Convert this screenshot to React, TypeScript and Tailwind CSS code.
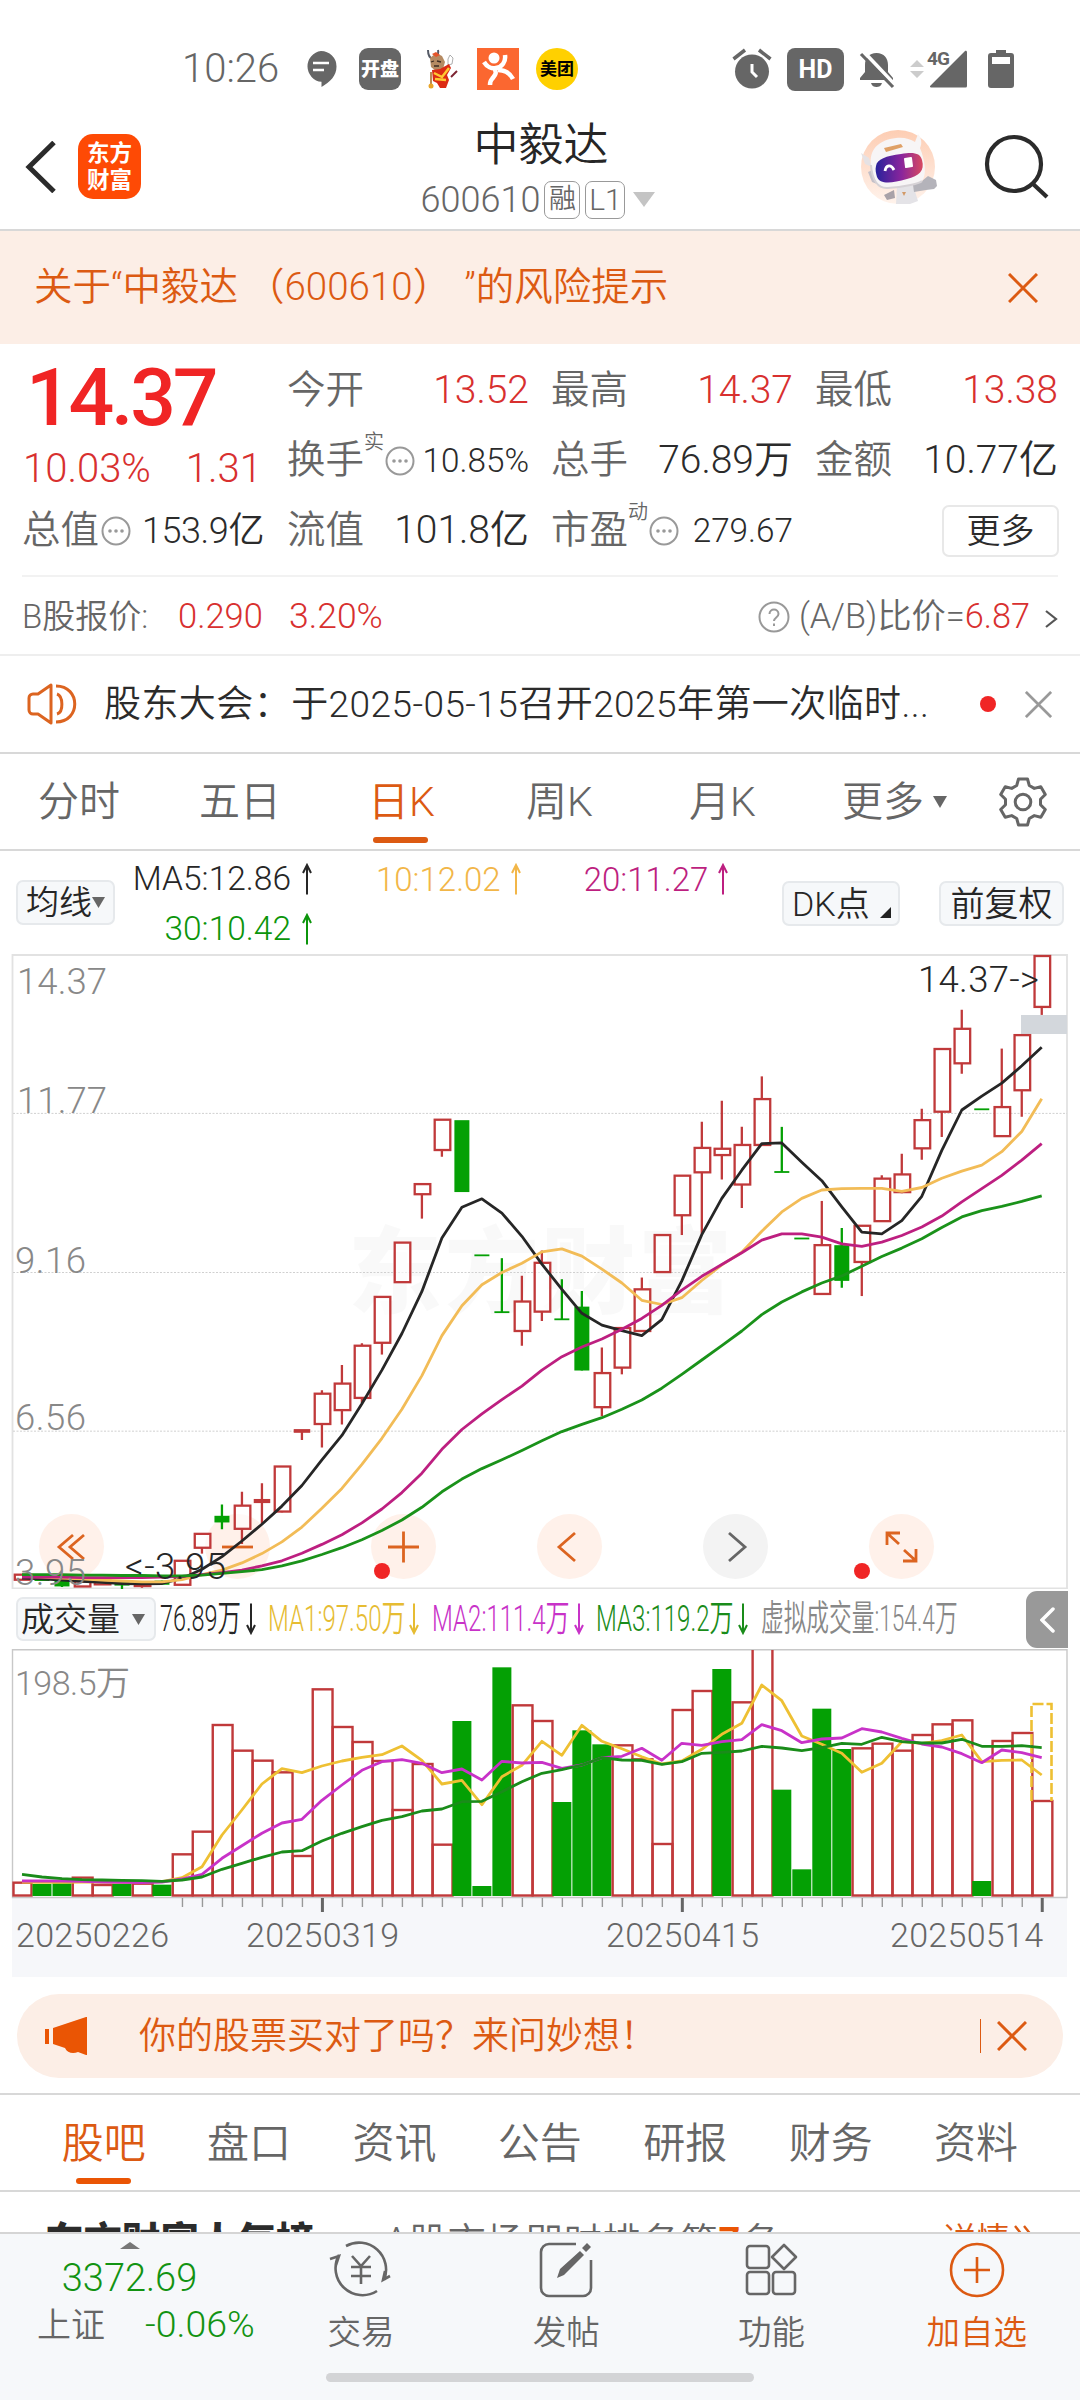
import type { ReactNode } from "react";
import clsx from "clsx";

const RED = "#c0393a";
const GREEN = "#04a004";

// [color, open/close top, bottom, high, low] in chart units
type Candle = ["r" | "g", number, number, number, number];

const candles: Candle[] = [
  ["r", 1508, 1520, 1508, 1520], ["g", 1517, 1521, 1516, 1522], ["g", 1522, 1534, 1520, 1537],
  ["r", 1524, 1536, 1524, 1536], ["r", 1522, 1531, 1520, 1532], ["g", 1526, 1532, 1524, 1544],
  ["r", 1526, 1535, 1524, 1539], ["g", 1524, 1530, 1522, 1532], ["r", 1475, 1532, 1475, 1532],
  ["r", 1411, 1444, 1411, 1458], ["g", 1370, 1382, 1341, 1400], ["r", 1344, 1399, 1311, 1435],
  ["r", 1330, 1336, 1291, 1387], ["r", 1251, 1358, 1251, 1360], ["r", 1164, 1169, 1164, 1188],
  ["r", 1078, 1150, 1070, 1206], ["r", 1054, 1117, 1010, 1151], ["r", 964, 1088, 958, 1100],
  ["r", 848, 957, 848, 985], ["r", 719, 813, 719, 813], ["r", 580, 604, 580, 662],
  ["r", 427, 499, 427, 515], ["g", 430, 597, 430, 597], ["g", 749, 749, 749, 749],
  ["g", 884, 884, 756, 884], ["r", 859, 929, 798, 964], ["r", 767, 883, 738, 905],
  ["g", 901, 901, 806, 901], ["g", 873, 1021, 834, 1023], ["r", 1029, 1110, 968, 1131],
  ["r", 922, 1016, 922, 1032], ["r", 830, 929, 802, 929], ["r", 701, 789, 701, 789],
  ["r", 560, 654, 560, 701], ["r", 494, 552, 432, 700], ["r", 496, 511, 382, 569],
  ["r", 487, 581, 444, 637], ["r", 378, 487, 324, 487], ["g", 551, 551, 444, 551],
  ["g", 709, 709, 709, 709], ["r", 725, 841, 620, 841], ["g", 727, 808, 684, 826],
  ["r", 679, 765, 679, 846], ["r", 567, 668, 559, 668], ["r", 557, 599, 508, 602],
  ["r", 428, 495, 401, 522], ["r", 259, 408, 259, 468], ["r", 211, 293, 166, 318],
  ["g", 402, 402, 402, 402], ["r", 397, 466, 258, 466], ["r", 226, 357, 226, 420],
  ["r", 38, 159, 38, 178],
];

const priceLines: [string, number[]][] = [
  ["#262626", [1516, 1518, 1521, 1524, 1526, 1529, 1530, 1529, 1517, 1495, 1465, 1428, 1388, 1345, 1296, 1235, 1177, 1102, 1022, 935, 835, 708, 635, 615, 649, 704, 770, 830, 887, 915, 928, 940, 902, 810, 700, 614, 547, 484, 482, 528, 572, 634, 694, 698, 667, 609, 500, 404, 371, 340, 299, 255]],
  ["#f2bc57", [1512, 1514, 1516, 1518, 1521, 1523, 1525, 1525, 1520, 1508, 1497, 1480, 1458, 1430, 1395, 1350, 1303, 1246, 1184, 1115, 1035, 940, 869, 819, 790, 768, 741, 734, 751, 782, 815, 856, 866, 850, 809, 772, 742, 692, 646, 614, 594, 591, 590, 590, 597, 588, 566, 549, 535, 503, 455, 377]],
  ["#bd1f80", [1514, 1514, 1514, 1515, 1515, 1515, 1515, 1514, 1512, 1508, 1503, 1497, 1487, 1475, 1457, 1436, 1413, 1385, 1352, 1313, 1267, 1210, 1163, 1126, 1092, 1060, 1022, 990, 967, 948, 925, 899, 868, 832, 799, 771, 743, 713, 698, 698, 706, 722, 728, 718, 702, 682, 656, 622, 591, 559, 523, 484]],
  ["#1a921a", [1508, 1508, 1508, 1509, 1509, 1510, 1510, 1511, 1511, 1509, 1505, 1501, 1496, 1487, 1475, 1460, 1444, 1425, 1403, 1378, 1348, 1311, 1281, 1256, 1235, 1213, 1190, 1168, 1151, 1135, 1115, 1093, 1065, 1032, 998, 964, 929, 890, 860, 836, 815, 798, 775, 752, 732, 710, 683, 658, 643, 633, 621, 608]],
];

const volumes: ["r" | "g", number][] = [
  ["r", 908], ["g", 912], ["g", 910], ["r", 893], ["r", 915], ["g", 912], ["r", 911], ["g", 914],
  ["r", 823], ["r", 755], ["r", 435], ["r", 512], ["r", 542], ["r", 577], ["r", 828], ["r", 328],
  ["r", 441], ["r", 486], ["r", 543], ["r", 690], ["r", 552], ["r", 794], ["g", 423], ["g", 918],
  ["g", 262], ["r", 376], ["r", 423], ["g", 666], ["g", 451], ["g", 493], ["r", 496], ["r", 538],
  ["r", 792], ["r", 390], ["r", 333], ["g", 267], ["r", 367], ["r", 205], ["g", 629], ["g", 868],
  ["g", 386], ["g", 507], ["r", 505], ["r", 491], ["r", 512], ["r", 465], ["r", 433], ["r", 421],
  ["g", 903], ["r", 483], ["r", 459], ["r", 663],
];

const volumeLines: [string, number[]][] = [
  ["#eec033", [906, 907, 907, 906, 906, 907, 907, 905, 893, 860, 765, 690, 612, 566, 578, 558, 543, 532, 524, 498, 541, 612, 601, 674, 590, 556, 484, 526, 436, 484, 506, 530, 552, 543, 508, 463, 430, 315, 362, 468, 493, 520, 577, 550, 485, 490, 482, 465, 545, 541, 540, 585]],
  ["#c832c8", [903, 903, 903, 904, 906, 907, 908, 906, 897, 883, 835, 797, 760, 729, 718, 661, 615, 571, 545, 539, 550, 578, 567, 600, 544, 549, 547, 565, 555, 533, 529, 505, 541, 490, 496, 485, 479, 434, 452, 488, 477, 474, 446, 456, 475, 492, 501, 521, 548, 510, 518, 533]],
  ["#1a8c1a", [883, 891, 896, 899, 900, 901, 902, 904, 900, 891, 868, 850, 832, 816, 812, 783, 760, 740, 721, 710, 693, 687, 665, 664, 635, 605, 580, 569, 555, 533, 540, 541, 553, 545, 520, 517, 513, 499, 504, 512, 503, 490, 493, 472, 485, 489, 489, 478, 499, 499, 497, 503]],
];

const cx = (i: number) => 22 + i * 19.995;
const priceY = (v: number) => v / 2.376 - 14;
const volY = (v: number) => v / 3 - 69;
const points = (values: number[], y: (v: number) => number) =>
  values.map((v, i) => `${cx(i).toFixed(1)},${y(v).toFixed(1)}`).join(" ");

/* ---------- small pieces ---------- */

function Close({ size, className }: { size: number; className?: string }) {
  return (
    <svg width={size} height={size} viewBox="0 0 30 30" fill="none" stroke="currentColor" strokeWidth="3" className={className}>
      <path d="M1 1l28 28M29 1L1 29" />
    </svg>
  );
}

function Caret({ w, h, up, className }: { w: number; h: number; up?: boolean; className?: string }) {
  return (
    <svg width={w} height={h} viewBox="0 0 10 10" preserveAspectRatio="none" fill="currentColor" className={className}>
      <path d={up ? "M0 10L5 0l5 10z" : "M0 0h10L5 10z"} />
    </svg>
  );
}

function Arrow({ down, className }: { down?: boolean; className?: string }) {
  return (
    <svg width="10" height="32" viewBox="0 0 10 32" fill="none" stroke="currentColor" strokeWidth="2" className={clsx("shrink-0", down && "rotate-180", className)}>
      <path d="M5 1.500v30M1 10L5 2l4 8" />
    </svg>
  );
}

// Text squeezed horizontally into a fixed width
function Narrow({ w, scale, children }: { w: string; scale: string; children: ReactNode }) {
  return (
    <span className={clsx("block shrink-0", w)}>
      <span className={clsx("block w-max origin-left", scale)}>{children}</span>
    </span>
  );
}

function Dots() {
  return (
    <svg width="30" height="30" viewBox="0 0 30 30" fill="none" stroke="#999" strokeWidth="2">
      <circle cx="15" cy="15" r="13.500" />
      <g fill="#999" stroke="none">
        <circle cx="9" cy="15" r="1.800" />
        <circle cx="15" cy="15" r="1.800" />
        <circle cx="21" cy="15" r="1.800" />
      </g>
    </svg>
  );
}

/* ---------- status bar + header ---------- */

function StatusBar() {
  return (
    <div className="flex h-[118px] shrink-0 items-center pt-5 pl-[182px] text-[#666]">
      <span className="w-[123px] text-[40px]">10:26</span>
      <svg width="32" height="38" viewBox="0 0 32 38" fill="#666">
        <path d="M16 1a15.500 15.500 0 0 1 15.500 15.500C31.500 26 25 32 16.500 37v-5.200A15.500 15.500 0 0 1 16 1z" />
        <path d="M8 13h16M8 20h11" stroke="#fff" strokeWidth="2.600" />
      </svg>
      <span className="ml-[22px] flex size-[42px] items-center justify-center rounded-[9px] bg-[#666] text-[19px] font-black text-white">开盘</span>
      <svg width="32" height="42" viewBox="0 0 32 42" className="ml-[25px]">
        <path d="M2 2c0 5 1 8 5 9M12 2c1 4-1 7-3 9" fill="none" stroke="#555a66" strokeWidth="2" />
        <path d="M4 10l6-5 6 3 3 6-2 7-7 2-5-4z" fill="#b58a62" />
        <path d="M6 6l4-2 4 3-4 2z" fill="#e5542a" />
        <path d="M5 14l3-1M11 13l4 1M8 18h5" stroke="#3c2c22" strokeWidth="1.300" />
        <path d="M22 11l2-4 3 3-1 6-4 1z" fill="#fff" stroke="#999" strokeWidth=".8" />
        <path d="M6 22l8-1 9-5 2 4-4 7 2 5-3 8h-6l-3-5-4-2z" fill="#dc2b14" />
        <path d="M8 25l8 4 7-9M9 31l11 1" fill="none" stroke="#ffc832" strokeWidth="2.500" />
        <path d="M5 24v12" stroke="#a5641e" strokeWidth="1.500" />
        <circle cx="5" cy="38" r="2.500" fill="#eaa528" />
        <path d="M25 29l6-6" stroke="#7c2432" strokeWidth="2" />
      </svg>
      <svg width="42" height="42" viewBox="0 0 42 42" className="ml-[19px]">
        <path fill="#fb6730" d="M0 0h42v42H0z" />
        <circle cx="17" cy="10" r="5.500" fill="#fff" />
        <path d="M7 14c3 5 8 7 12 6 6-1 10-6 9-13M17 20c4 6 0 8-2 11-2 2-2 4-2 6M21 22c6 0 12 3 15 9" fill="none" stroke="#fff" strokeWidth="4.500" />
      </svg>
      <span className="ml-[17px] flex size-[42px] items-center justify-center rounded-full bg-[#ffd000] text-[17px] font-bold text-black">美团</span>

      <svg width="40" height="42" viewBox="0 0 40 42" className="ml-[154px]">
        <circle cx="20" cy="23.500" r="17" fill="#666" />
        <path d="M1.500 11L13 2M38.500 11L27 2" stroke="#666" strokeWidth="3.500" />
        <path d="M20 16v8l5 5" fill="none" stroke="#fff" strokeWidth="3" />
      </svg>
      <span className="ml-[15px] flex h-[43px] w-[57px] items-center justify-center rounded-[8px] bg-[#666] pt-px text-[25px] font-bold text-white">HD</span>
      <svg width="36" height="40" viewBox="0 0 36 40" className="ml-[15px]" fill="#666">
        <path d="M17.500 4c7.500 0 11.500 5 11.500 12v7l5 6v2H1v-2l5-6v-7C6 9 10 4 17.500 4zM12 34h11c-1 3-3 4-5.500 4S13 37 12 34z" />
        <path d="M4 2l31 33" stroke="#fff" strokeWidth="4" />
        <path d="M2 5l32 33" stroke="#666" strokeWidth="3.200" />
      </svg>
      <svg width="58" height="40" viewBox="0 0 58 40" overflow="visible" className="ml-[15px]">
        <path d="M0 18l7-7 7 7zM0 22l7 7 7-7z" fill="#ccc" />
        <path d="M57 3v34a1.500 1.500 0 0 1-1.500 1.500H21c-1 0-1.400-1-.7-1.700L55 2c.8-.8 2 0 2 1z" fill="#666" />
        <text x="17" y="16" fontSize="19" fontWeight="700" fill="#666" textLength="23">4G</text>
      </svg>
      <svg width="26" height="38" viewBox="0 0 26 38" className="ml-[20px]">
        <path d="M8 0h10v3h5a3 3 0 0 1 3 3v29a3 3 0 0 1-3 3H3a3 3 0 0 1-3-3V6a3 3 0 0 1 3-3h5z" fill="#666" />
        <path d="M4 7h18v7H4z" fill="#fff" />
      </svg>
    </div>
  );
}

function Robot() {
  return (
    <svg width="78" height="78" viewBox="0 0 78 78">
      <defs>
        <linearGradient id="bg" x1="0" y1="0" x2="0" y2="1">
          <stop offset="0" stopColor="#fdcdb3" />
          <stop offset="1" stopColor="#fff3ec" />
        </linearGradient>
        <linearGradient id="visor" x1="0" y1="0" x2="1" y2="0">
          <stop offset="0" stopColor="#28229c" />
          <stop offset=".55" stopColor="#8a259c" />
          <stop offset="1" stopColor="#d84a60" />
        </linearGradient>
        <clipPath id="round">
          <path d="M2 0h76v60l-10 18H10L2 50z" />
        </clipPath>
      </defs>
      <circle cx="39" cy="39" r="37" fill="url(#bg)" />
      <g clipPath="url(#round)">
        <path d="M38 57l15-3 6 19-8 3H37z" fill="#e4e3e7" />
        <path d="M35 62l-10 5 3 5 8-2z" fill="#a9a2a8" />
        <path d="M54 57l9-4 6-5 4 2 4 2 1 6-3 3-8 1-12 2z" fill="#b4b3ba" />
        <path d="M2 25l8 5 3 9-7-3z" fill="#e6e2e4" />
        <path d="M9 44l7-3 2 15-5-2z" fill="#c4c0c8" />
        <path d="M12 37c-2-16 8-25 25-27 8-1 14 1 19 4l3-8c4 5 4 10 2 14 5 12 7 27 2 33-3 3-20 6-34 7-10 1-15-8-17-23z" fill="#f7f5f6" />
        <path d="M12 37c1 15 7 24 17 23 14-1 31-4 34-7" fill="none" stroke="#d6d2d6" strokeWidth="2" />
        <path d="M25 20l17-4 2 3-17 5z" fill="#dfa066" />
        <path d="M17 38c1-7 10-10 25-12 13-2 19-1 21 6 3 11-3 16-15 19-17 5-27 5-30-2-1-4-2-7-1-11z" fill="url(#visor)" />
        <path d="M26 43c1-6 6-7 9-1" fill="none" stroke="#fff" strokeWidth="2.800" />
        <path d="M46 31l6-1 1 8-6 1z" fill="#fff" stroke="#fff" strokeWidth="2" strokeLinejoin="round" />
        <path d="M43 64h4l-2 4z" fill="#d29a68" />
      </g>
    </svg>
  );
}

function Header() {
  return (
    <header className="flex h-[113px] shrink-0 items-center border-b-2 border-[#d8d8d8] pb-[14px] pl-[24px]">
      <svg width="32" height="52" viewBox="0 0 32 52" fill="none" stroke="#2b2b2b" strokeWidth="5">
        <path d="M30 1.500L5 26l25 24.500" />
      </svg>
      <div className="mr-[222px] ml-[22px] flex h-[65px] w-[63px] flex-col items-center justify-center rounded-[15px] bg-[#fe4a05] text-[22.500px] leading-[27px] font-bold text-white">
        <span>东方</span>
        <span>财富</span>
      </div>
      <div className="flex w-[350px] flex-col items-center pt-[12px]">
        <h1 className="pl-[6px] text-[45px] leading-[54px] font-[350] text-[#262626]">中毅达</h1>
        <div className="flex h-[54px] items-center text-[#666]">
          <span className="text-[36px]">600610</span>
          <span className="ml-[4px] flex h-[38px] w-[36px] items-center justify-center rounded-[7px] border border-[#999] text-[27px]">融</span>
          <span className="ml-[5px] flex h-[38px] w-[40px] items-center justify-center rounded-[7px] border border-[#999] text-[30px]">L1</span>
          <Caret w={22} h={15} className="ml-[8px] text-[#c4c4c4]" />
        </div>
      </div>
      <span className="ml-[146px]"><Robot /></span>
      <svg width="66" height="66" viewBox="0 0 66 66" fill="none" stroke="#2b2b2b" strokeWidth="4.200" className="ml-[47px]">
        <circle cx="30" cy="30" r="27" />
        <path d="M48 49l15 14" />
      </svg>
    </header>
  );
}

/* ---------- quote ---------- */

function Cell({ label, value, red, sup, small }: { label: string; value: string; red?: boolean; sup?: string; small?: boolean }) {
  return (
    <div className="flex h-[70px] items-center">
      <span className="text-[38.500px] text-[#666]">{label}</span>
      {sup && <span className="-mt-[38px] -mr-[2px] text-[20px] text-[#666]">{sup}</span>}
      {small && <span className="ml-[3px] shrink-0"><Dots /></span>}
      <span className={clsx("-mr-[2px] ml-auto", small ? "text-[33.300px]" : "text-[39px]", red ? "text-[#d8302f]" : "text-[#2b2b2b]")}>{value}</span>
    </div>
  );
}

function Quote() {
  return (
    <section className="shrink-0">
      <div className="mx-[22px] grid h-[233px] grid-cols-[241px_240px_240px_241px] gap-x-6 border-b-2 border-[#f2f2f2] pt-[11.500px]">
        <div>
          <div className="flex h-[85px] items-center pl-[4px] text-[80.500px] font-medium tracking-[-3.200px] text-[#f02525]">14.37</div>
          <div className="flex h-[57px] items-center justify-between pr-px pl-px text-[40px] text-[#d8302f]">
            <span>10.03%</span>
            <span>1.31</span>
          </div>
          <div className="-mt-[2px] flex h-[70px] items-center">
            <span className="text-[38.500px] text-[#666]">总值</span>
            <span className="ml-[2px]"><Dots /></span>
            <span className="-mr-px ml-auto text-[36px] tracking-[-0.400px] text-[#2b2b2b]">153.9亿</span>
          </div>
        </div>
        <div>
          <Cell label="今开" value="13.52" red />
          <Cell label="换手" sup="实" value="10.85%" small />
          <Cell label="流值" value="101.8亿" />
        </div>
        <div>
          <Cell label="最高" value="14.37" red />
          <Cell label="总手" value="76.89万" />
          <Cell label="市盈" sup="动" value="279.67" small />
        </div>
        <div>
          <Cell label="最低" value="13.38" red />
          <Cell label="金额" value="10.77亿" />
          <div className="-mr-[3px] flex h-[70px] items-center justify-end">
            <button className="h-[52px] w-[117px] rounded-[7px] border-2 border-[#e8e8e8] text-[34px] leading-[44px] text-[#2b2b2b]">更多</button>
          </div>
        </div>
      </div>

      <div className="flex h-[79px] items-center border-b-2 border-[#eee] pt-[2px] pr-[22px] pl-[22px] text-[33px] text-[#666]">
        <span className="w-[156px]">B股报价:</span>
        <span className="w-[111px] text-[34.500px] text-[#d8302f]">0.290</span>
        <span className="text-[35.500px] text-[#d8302f]">3.20%</span>
        <svg width="32" height="32" viewBox="0 0 32 32" fill="none" stroke="#999" strokeWidth="2" className="mr-[9px] ml-auto">
          <circle cx="16" cy="16" r="14.500" />
          <path d="M11.500 13c0-6 9-6 9 0 0 3.500-4.500 3.500-4.500 7M16 22.500V25" />
        </svg>
        <span className="text-[34.300px]">(A/B)比价=<span className="text-[#d8302f]">6.87</span></span>
        <svg width="13" height="20" viewBox="0 0 13 20" fill="none" stroke="#555" strokeWidth="2.200" className="mt-[4px] ml-[15px]">
          <path d="M1 2l10 8-10 8" />
        </svg>
      </div>

      <div className="flex h-[98px] items-center border-b-2 border-[#d8d8d8] pl-[27px]">
        <svg width="50" height="42" viewBox="0 0 50 42" fill="none" stroke="#dc6420" strokeWidth="3">
          <path d="M24 2v38L11 31H6a4 4 0 0 1-4-4V15a4 4 0 0 1 4-4h5z" strokeLinejoin="round" />
          <path d="M30 11c6 2 7 18 0 20M29 3c25 0 25 36 0 36" />
        </svg>
        <span className="ml-[27px] w-[826px] text-[37px] tracking-[0.430px] text-[#2b2b2b]">股东大会：于2025-05-15召开2025年第一次临时...</span>
        <span className="ml-[50px] size-[16px] rounded-full bg-[#f02525]" />
        <Close size={27} className="ml-[29px] text-[#999]" />
      </div>
    </section>
  );
}

/* ---------- k-line ---------- */

function PeriodTabs() {
  const tabs = [
    { label: "分时", w: "w-[161px]" },
    { label: "五日", w: "w-[169px]" },
    { label: "日K", w: "w-[158px]", active: true },
    { label: "周K", w: "w-[163px]" },
    { label: "月K", w: "w-[153px]" },
    { label: "更多", w: "w-[91px]" },
  ];
  return (
    <nav className="flex h-[97px] shrink-0 items-center border-b-2 border-[#d8d8d8] pl-[38px] text-[41px] text-[#666]">
      {tabs.map((t) => (
        <span key={t.label} className={clsx("relative top-px", t.w, t.active && "text-[#dc5a12]")}>
          {t.label}
          {t.active && <i className="absolute top-[55px] left-[5px] h-[6px] w-[55px] rounded-full bg-[#dc5a12]" />}
        </span>
      ))}
      <Caret w={14} h={12} />
      <svg width="50" height="50" viewBox="0 0 50 50" fill="none" stroke="#666" strokeWidth="3" strokeLinejoin="round" className="ml-[51px]">
        <path d="M20.500 2h9l1.800 6.500 5 2.900 6.500-1.700 4.500 7.800-4.800 4.800v5.400l4.800 4.800-4.500 7.800-6.500-1.700-5 2.900L29.500 48h-9l-1.800-6.500-5-2.900-6.500 1.700-4.500-7.800 4.800-4.800v-5.400L2.700 17.500l4.500-7.800 6.500 1.700 5-2.900z" />
        <circle cx="25" cy="25" r="7.800" />
      </svg>
    </nav>
  );
}

function MaRow() {
  return (
    <div className="flex h-[103px] shrink-0 items-start pl-[16px] text-[33.500px] text-[#262626]">
      <button className="mt-[29px] flex h-[45px] w-[99px] items-center justify-center rounded-[7px] border-2 border-[#e6e9ec] bg-[#f6f8fa] text-[33px] leading-none">
        均线<Caret w={13} h={11} className="text-[#666]" />
      </button>
      <div className="mt-[3px] ml-[17px] flex w-[180px] flex-col items-end">
        <span className="flex h-[50px] items-center">MA5:12.86<Arrow className="ml-[11px]" /></span>
        <span className="flex h-[50px] items-center text-[#0b950b]">30:10.42<Arrow className="ml-[11px]" /></span>
      </div>
      <span className="mt-[3px] ml-[64px] flex h-[50px] items-center text-[33px] text-[#f2b648]">10:12.02<Arrow className="ml-[10px]" /></span>
      <span className="mt-[3px] ml-[63px] flex h-[50px] items-center text-[33px] text-[#bd1f80]">20:11.27<Arrow className="ml-[10px]" /></span>
      <button className="mt-[30px] ml-auto flex h-[45px] w-[118px] items-center rounded-[7px] border-2 border-[#e6e9ec] bg-[#f6f8fa] pl-[8px] text-[34px] leading-none">
        DK点
        <svg width="11" height="11" viewBox="0 0 11 11" className="mt-[17px] ml-[10px]"><path d="M11 0v11H0z" fill="#222" /></svg>
      </button>
      <button className="mt-[30px] mr-[16px] ml-[39px] flex h-[45px] w-[125px] items-center justify-center rounded-[7px] border-2 border-[#e6e9ec] bg-[#f6f8fa] text-[34px] leading-none">前复权</button>
    </div>
  );
}

function ChartButtons() {
  const round = "flex size-[65px] items-center justify-center rounded-full bg-[#fff1ea]";
  return (
    <div className="absolute top-[560px] left-[39px] flex gap-[101px] text-[#dc6420]">
      {[
        <path d="M26 2L12 14l14 12M15 2L1 14l14 12" />,
        <path d="M-2 14h31" />,
        <path d="M-2 14h31M13.500-1.500v31" />,
        <path d="M19 0L3 14l16 14" />,
        <path d="M7 0l16 14L7 28" />,
        <path d="M-1 12V0h13M0 1l11 10M28 16v12H15M27 27L16 17" />,
      ].map((icon, i) => (
        <span key={i} className={clsx(round, i === 4 && "!bg-[#f3f3f3] text-[#666]")}>
          <svg width="28" height="28" viewBox="0 0 28 28" fill="none" stroke="currentColor" strokeWidth="2.800" overflow="visible">{icon}</svg>
        </span>
      ))}
    </div>
  );
}

function PriceChart() {
  const labels: [string, number, number, number][] = [
    ["14.37", 17, 40, 90], ["11.77", 17, 159, 90], ["9.16", 15, 319, 71], ["6.56", 15, 476, 71], ["3.95", 15, 631, 71],
  ];
  return (
    <div className="relative h-[635px] shrink-0">
      <ChartButtons />
      <svg width="1080" height="635" viewBox="0 0 1080 635" className="relative" fontSize="36.500">
        <text x="348" y="352" fontSize="94" fontWeight="900" fill="#000" fillOpacity=".025" textLength="384">东方财富</text>
        <path d="M12.500 1h1054.500v633.500H12.500z" fill="none" stroke="#e2e2e2" strokeWidth="1.800" />
        {[412, 790, 1167].map((v) => (
          <path key={v} d={`M13 ${priceY(v)}h1054`} stroke="#d0d0d0" strokeDasharray="2 1.500" />
        ))}
        <path d="M1021 61h46v19h-46z" fill="#d3d7dc" />
        {candles.map(([c, top, bottom, high, low], i) => {
          const color = c === "r" ? RED : GREEN;
          const x = cx(i);
          const t = priceY(top);
          const b = priceY(bottom);
          return (
            <g key={i} stroke={color} strokeWidth="2.300">
              {c === "r" && bottom - top > 8 ? (
                <rect x={x - 7.2} y={t} width="15.600" height={b - t} fill="#fff" fillOpacity=".6" />
              ) : (
                <rect x={x - (c === "r" ? 8.200 : 7.500)} y={t - 0.8} width={c === "r" ? 16.5 : 15} height={Math.max(b - t + 1.6, 1.8)} fill={color} stroke="none" />
              )}
              <path d={`M${x} ${priceY(high)}V${t}M${x} ${b}V${priceY(low)}`} />
            </g>
          );
        })}
        {priceLines.map(([color, values]) => (
          <polyline key={color} points={points(values, priceY)} fill="none" stroke={color} strokeWidth="2.800" strokeLinejoin="round" />
        ))}
        <g fill="#888">
          {labels.map(([s, x, y, w]) => (
            <text key={s} x={x} y={y} textLength={w}>{s}</text>
          ))}
        </g>
        <text x="125" y="625" fill="#262626" textLength="101">&lt;-3.95</text>
        <text x="918" y="38" fill="#262626" textLength="121">14.37-&gt;</text>
        <circle cx="382" cy="617" r="8" fill="#f02525" />
        <circle cx="862" cy="617" r="8" fill="#f02525" />
      </svg>
    </div>
  );
}

function VolumeLegend() {
  return (
    <div className="flex h-[60px] shrink-0 items-center pl-[16px] text-[36px] text-[#262626]">
      <button className="mr-[4px] flex h-[44px] w-[140px] items-center rounded-[7px] border-2 border-[#e6e9ec] bg-[#f6f8fa] pl-[3px] text-[33px] leading-none">
        成交量<Caret w={13} h={11} className="ml-[12px] text-[#666]" />
      </button>
      <Narrow w="w-[86px]" scale="scale-x-[0.65]">76.89万</Narrow>
      <Arrow down className="mr-[12px]" />
      <span className="flex items-center text-[#e6bc32]"><Narrow w="w-[141px]" scale="scale-x-[0.668]">MA1:97.50万</Narrow><Arrow down /></span>
      <span className="ml-[13px] flex items-center text-[#c832c8]"><Narrow w="w-[142px]" scale="scale-x-[0.668]">MA2:111.4万</Narrow><Arrow down /></span>
      <span className="ml-[12px] flex items-center text-[#1a8c1a]"><Narrow w="w-[142px]" scale="scale-x-[0.668]">MA3:119.2万</Narrow><Arrow down /></span>
      <span className="ml-[13px] text-[#888]"><Narrow w="w-[200px]" scale="scale-x-[0.630]">虚拟成交量:154.4万</Narrow></span>
      <span className="mt-px mr-[12px] ml-auto flex h-[57px] w-[42px] items-center justify-center rounded-l-[11px] bg-[#999]">
        <svg width="15" height="26" viewBox="0 0 15 26" fill="none" stroke="#fff" strokeWidth="3.500" strokeLinecap="round"><path d="M13 2L2 13l11 11" /></svg>
      </span>
    </div>
  );
}

function VolumeChart() {
  const dates: [string, number][] = [["20250226", 16], ["20250319", 246], ["20250415", 606], ["20250514", 890]];
  const base = volY(948);
  return (
    <svg width="1080" height="328" viewBox="0 0 1080 328" className="block shrink-0" fontSize="34">
      <path d="M12 248h1055v80H12z" fill="#f6f7fa" />
      <path d="M12.500 .8h1054.500v247.700H12.500z" fill="#fff" stroke="#c8c8c8" strokeWidth="1.400" />
      <svg y="1" width="1080" height="327" viewBox="0 1 1080 327">
        {volumes.map(([c, v], i) =>
          c === "r" ? (
            <rect key={i} x={cx(i) - (i ? 9.200 : 8.500)} y={volY(v)} width={i ? 19.8 : 18} height={base - volY(v) - 0.500} fill="none" stroke={RED} strokeWidth="2.400" />
          ) : (
            <rect key={i} x={cx(i) - 9.5} y={volY(v)} width="19" height={base - volY(v)} fill={GREEN} />
          )
        )}
        <path d={`M1031.500 ${volY(663)}V${volY(372)}h20V${volY(663)}`} fill="none" stroke="#eec033" strokeWidth="2.600" strokeDasharray="11 3" />
      </svg>
      {volumeLines.map(([color, values]) => (
        <polyline key={color} points={points(values, volY)} fill="none" stroke={color} strokeWidth="2.800" strokeLinejoin="round" />
      ))}
      {volumes.map((_, i) => {
        const major = i === 15 || i === 33 || i === 51;
        return i > 7 && (
          <path key={i} d={`M${cx(i) + 0.5} 249V${major ? 263 : 258}`} stroke={major ? "#666" : "#999"} strokeWidth={major ? 3 : 1.4} />
        );
      })}
      <text x="15" y="46" fill="#888" textLength="115">198.5万</text>
      <g fill="#666">
        {dates.map(([d, x]) => (
          <text key={d} x={x} y="298" textLength="153">{d}</text>
        ))}
      </g>
    </svg>
  );
}

/* ---------- bottom ---------- */

function Promo() {
  return (
    <div className="mx-[17px] mt-[17px] flex h-[84px] shrink-0 items-center rounded-full bg-[#fceee6] pl-[27px] text-[#dc5a12]">
      <svg width="44" height="38" viewBox="0 0 44 38" fill="#ea5504">
        <path d="M1 12h4v15H1zM9 11l33-11h1v38h-1l-8-3c-5 2-11 1-13-4l-12-4z" />
      </svg>
      <span className="ml-[51px] text-[37px]">你的股票买对了吗？来问妙想！</span>
      <i className="mr-[16px] ml-auto h-[34px] w-[1.500px] bg-[#dc5a12]" />
      <Close size={30} className="mr-[36px]" />
    </div>
  );
}

function SectionTabs() {
  return (
    <nav className="mt-[15px] flex h-[99px] shrink-0 items-center border-y-2 border-[#d8d8d8] pl-[31px] text-[42px] text-[#666]">
      {["股吧", "盘口", "资讯", "公告", "研报", "财务", "资料"].map((t, i) => (
        <span key={t} className={clsx("relative top-px w-[145.400px] text-center", i === 0 && "text-[#dc5a12]")}>
          {t}
          {i === 0 && <i className="absolute top-[55px] left-[45px] h-[6px] w-[55px] rounded-full bg-[#ea5504]" />}
        </span>
      ))}
    </nav>
  );
}

function RankRow() {
  return (
    <div className="flex h-[40px] shrink-0 items-start overflow-hidden pt-[31px] pr-[46px] pl-[45px] text-[38px] text-[#666]">
      <span className="text-[38.500px] font-black text-[#2b2b2b]">东方财富人气榜</span>
      <span className="ml-[70px] tracking-[0.700px]">A股市场即时排名第<b className="font-bold text-[#ea5504]">7</b>名</span>
      <span className="ml-auto text-[34px] text-[#dc5a12]">详情</span>
      <svg width="20" height="24" viewBox="0 0 20 24" fill="none" stroke="#dc5a12" strokeWidth="2.400" className="mt-[2px] ml-[4px]">
        <path d="M1 1l8 10-8 10M10 1l8 10-8 10" />
      </svg>
    </div>
  );
}

function BottomNav() {
  const items: [string, ReactNode][] = [
    ["交易", <g key="a"><path d="M15 6A27 27 0 0 1 53 40M59 36l-7 4 2-9M46 51A27 27 0 0 1 8 15M-1 19l9-3-3 9" /><path d="M21 16l9 10 9-10M30 26v18M20 27h20M20 36h20" /></g>],
    ["发帖", <g key="b"><path d="M40 4H13a8 8 0 0 0-8 8v36a8 8 0 0 0 8 8h34a8 8 0 0 0 8-8V20" /><path d="M21 38l3-9 20-18 4 4-20 20zM46 8l5-5 4 4-5 5z" fill="currentColor" stroke="none" /></g>],
    ["功能", <g key="c"><rect x="6" y="6" width="22" height="22" rx="3" /><rect x="6" y="32" width="22" height="22" rx="3" /><rect x="32" y="32" width="22" height="22" rx="3" /><path d="M43 5l12 12-12 12-12-12z" strokeLinejoin="round" /></g>],
    ["加自选", <g key="d"><circle cx="30" cy="30" r="26" /><path d="M30 17v26M17 30h26" /></g>],
  ];
  return (
    <footer className="flex h-[168px] shrink-0 flex-col items-center border-t-2 border-[#d5d5d5] bg-[#f6f8fa]">
      <div className="flex h-[139px] w-full">
        <div className="flex w-[259px] flex-col items-center pt-[8px] text-[#129312]">
          <Caret up w={20} h={7} className="text-[#777]" />
          <span className="mt-[4px] flex h-[50px] items-center text-[38px]">3372.69</span>
          <span className="-mt-px flex h-[46px] w-full items-center pl-[37px]">
            <span className="mr-[40px] text-[34px] text-[#666]">上证</span>
            <span className="text-[37.500px]">-0.06%</span>
          </span>
        </div>
        {items.map(([label, icon], i) => (
          <div key={label} className={clsx("-ml-px flex w-[206.200px] flex-col items-center pt-[6px]", i === 3 ? "text-[#dc5a12]" : "text-[#666]")}>
            <svg width="60" height="60" viewBox="0 0 60 60" fill="none" stroke="currentColor" strokeWidth="2.600" overflow="visible">{icon}</svg>
            <span className="mt-[8px] flex h-[50px] items-center text-[33.500px]">{label}</span>
          </div>
        ))}
      </div>
      <div className="h-[9px] w-[428px] rounded-full bg-[#d3d4d6]" />
    </footer>
  );
}

export default function App() {
  return (
    <div className="flex h-[2400px] w-[1080px] flex-col overflow-hidden bg-white font-['Roboto','Noto_Sans_CJK_SC',sans-serif] leading-none font-[350] whitespace-nowrap">
      <StatusBar />
      <Header />
      <div className="flex h-[113px] shrink-0 items-center justify-between bg-[#fceee6] pr-[42px] pl-[34px] text-[38.500px] text-[#dc5a12] [text-spacing-trim:space-all]">
        <span>
          关于“中毅达<span className="ml-[8px]">（600610）</span><span className="ml-[13px]">”</span>的风险提示
        </span>
        <Close size={30} />
      </div>
      <Quote />
      <PeriodTabs />
      <MaRow />
      <PriceChart />
      <VolumeLegend />
      <VolumeChart />
      <Promo />
      <SectionTabs />
      <RankRow />
      <BottomNav />
    </div>
  );
}
